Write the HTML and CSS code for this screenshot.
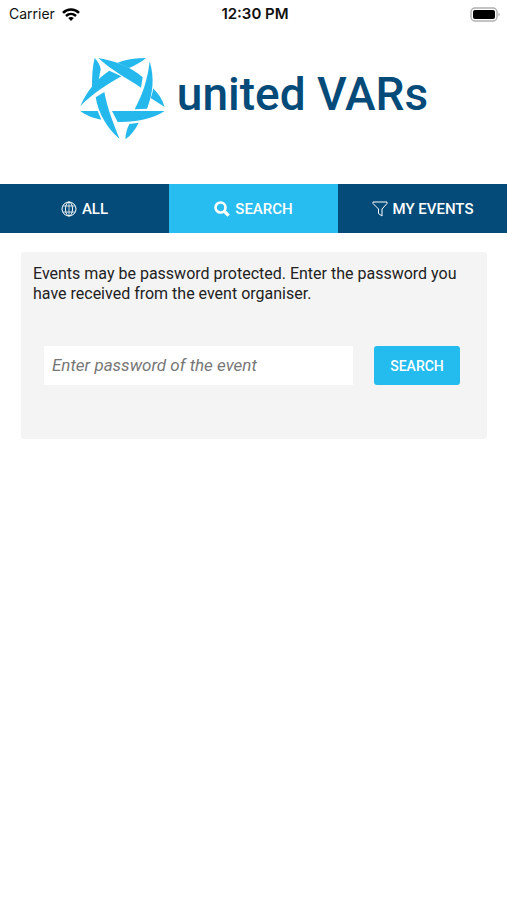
FILE: index.html
```html
<!DOCTYPE html>
<html lang="en">
<head>
<meta charset="utf-8">
<meta name="viewport" content="width=device-width, initial-scale=1">
<title>united VARs – Events</title>
<link rel="stylesheet" href="styles.css">
</head>
<body>
<div class="status">
  <div class="carrier">
    <span>Carrier</span>
    <svg class="wifi" viewBox="0 0 18 13" aria-hidden="true">
      <path d="M1 4.800C5.500 .3 12.500 .3 17 4.800" fill="none" stroke="#000" stroke-width="2.600"/>
      <path d="M4 8C7 5.200 11 5.200 14 8" fill="none" stroke="#000" stroke-width="2.400"/>
      <path d="M9 13 6.200 10.100C7.800 8.700 10.200 8.700 11.800 10.100Z"/>
    </svg>
  </div>
  <time class="clock">12:30 PM</time>
  <svg class="battery" viewBox="0 0 31 15" aria-hidden="true">
    <rect x="1" y="1" width="26" height="13" rx="4" fill="#fff" stroke="#b0b0b0" stroke-width="1.400"/>
    <rect x="3" y="3" width="22" height="9" rx="2"/>
    <path d="M28.500 5.500Q31 7.500 28.500 9.500Z" fill="#aaa"/>
  </svg>
</div>
<header class="brand">
  <svg class="star" viewBox="18 18 258 252" aria-hidden="true">
    <path d="M65 24C74 34 82 46 83 58L77 90L57 113C57 80 58 50 65 24Z"/>
    <path d="M22 168C42 122 72 86 109 62L145 79C100 104 58 132 22 168Z"/>
    <path d="M76 24C125 32 174 50 209 82L204 113C165 86 116 62 76 24Z"/>
    <path d="M219 24C190 24 160 28 133 38L168 54C186 46 205 37 219 24Z"/>
    <path d="M230 34C245 84 240 132 222 176L185 178C208 135 224 90 230 34Z"/>
    <path d="M240 115C256 130 268 148 275 171L233 144C237 134 240 125 240 115Z"/>
    <path d="M275 183C238 207 190 217 134 216L117 183Z"/>
    <path d="M22 183L74 183L85 209C60 204 40 197 22 183Z"/>
    <path d="M68 142L94 126C103 175 121 220 140 267C102 235 76 190 68 142Z"/>
    <path d="M157 268C158 250 162 235 169 222L197 218C188 237 175 255 157 268Z"/>
  </svg>
  <span class="wordmark">united VARs</span>
</header>
<nav class="tabs">
  <a class="tab" href="#all">
    <svg class="icon" viewBox="0 0 16 16" fill="none" stroke="currentColor" aria-hidden="true">
      <circle cx="8" cy="8" r="7"/><ellipse cx="8" cy="8" rx="3.500" ry="7"/><path d="M8 1V15M1.800 5H14.200M1.800 11H14.200" stroke-width=".8"/>
    </svg>
    <span>ALL</span>
  </a>
  <a class="tab active" href="#search" aria-current="page">
    <svg class="icon" viewBox="0 0 16 16" fill="none" stroke="currentColor" aria-hidden="true">
      <circle cx="6.500" cy="6.500" r="5" stroke-width="2.600"/><path d="M10 10L14.700 14.700" stroke-width="3.200"/>
    </svg>
    <span>SEARCH</span>
  </a>
  <a class="tab" href="#my-events">
    <svg class="icon" viewBox="0 0 16 16" fill="none" stroke="currentColor" stroke-linejoin="round" aria-hidden="true">
      <path d="M1 1H15V2.500L10 8V15L6.500 12.500V8L1 2.500Z"/>
    </svg>
    <span>MY EVENTS</span>
  </a>
</nav>
<main>
  <form class="card">
    <label class="hint" for="password">Events may be password protected. Enter the password you have received from the event organiser.</label>
    <div class="row">
      <input class="field" id="password" type="text" placeholder="Enter password of the event">
      <button class="submit" type="submit">SEARCH</button>
    </div>
  </form>
</main>
</body>
</html>
```
FILE: styles.css
```css
* {
  box-sizing: border-box;
}

body {
  margin: 0;
  background: #fff;
  color: #222;
  font-family: Roboto, sans-serif;
}

.status {
  display: grid;
  grid-template-columns: 1fr auto 1fr;
  align-items: center;
  height: 28px;
  padding: 0 6px 0 9px;
  color: #111;
  font: 14px/20px Inter, sans-serif;
}

.carrier {
  display: flex;
  align-items: center;
  gap: 7px;
}

.wifi {
  width: 18px;
  height: 13px;
}

.clock {
  font-size: 15px;
  font-weight: 600;
}

.battery {
  justify-self: end;
  width: 31px;
  height: 15px;
}

.brand {
  display: flex;
  justify-content: center;
  align-items: center;
  gap: 12px;
  height: 156px;
  padding-bottom: 16px;
}

.star {
  width: 86px;
  height: 84px;
  fill: #25b8ec;
}

.wordmark {
  padding-bottom: 8px;
  color: #044b79;
  font-size: 46px;
  font-weight: 500;
  line-height: 56px;
  white-space: nowrap;
}

.tabs {
  display: grid;
  grid-template-columns: repeat(3, 1fr);
}

.tab {
  display: flex;
  justify-content: center;
  align-items: center;
  gap: 5px;
  height: 49px;
  background: #044b79;
  color: #fff;
  font-size: 15px;
  font-weight: 500;
  text-decoration: none;
}

.tab.active {
  background: #27bdf0;
}

.icon {
  width: 16px;
  height: 16px;
}

main {
  padding: 19px 20px 19px 21px;
}

.card {
  padding: 12px 12px 54px;
  border-radius: 3px;
  background: #f4f4f4;
}

.hint {
  display: block;
  font-size: 16px;
  line-height: 20px;
}

.row {
  display: flex;
  gap: 21px;
  margin-top: 42px;
  padding: 0 15px 0 11px;
}

.field {
  flex: 1;
  min-width: 0;
  height: 39px;
  padding: 0 8px 2px;
  border: 0;
  background: #fff;
  color: #222;
  font: 17px Roboto, sans-serif;
}

.field::placeholder {
  color: #777;
  font-style: italic;
  opacity: 1;
}

.submit {
  width: 86px;
  height: 39px;
  padding: 0;
  border: 0;
  border-radius: 3px;
  background: #24bbee;
  color: #fff;
  font: 500 14px Roboto, sans-serif;
}
```
